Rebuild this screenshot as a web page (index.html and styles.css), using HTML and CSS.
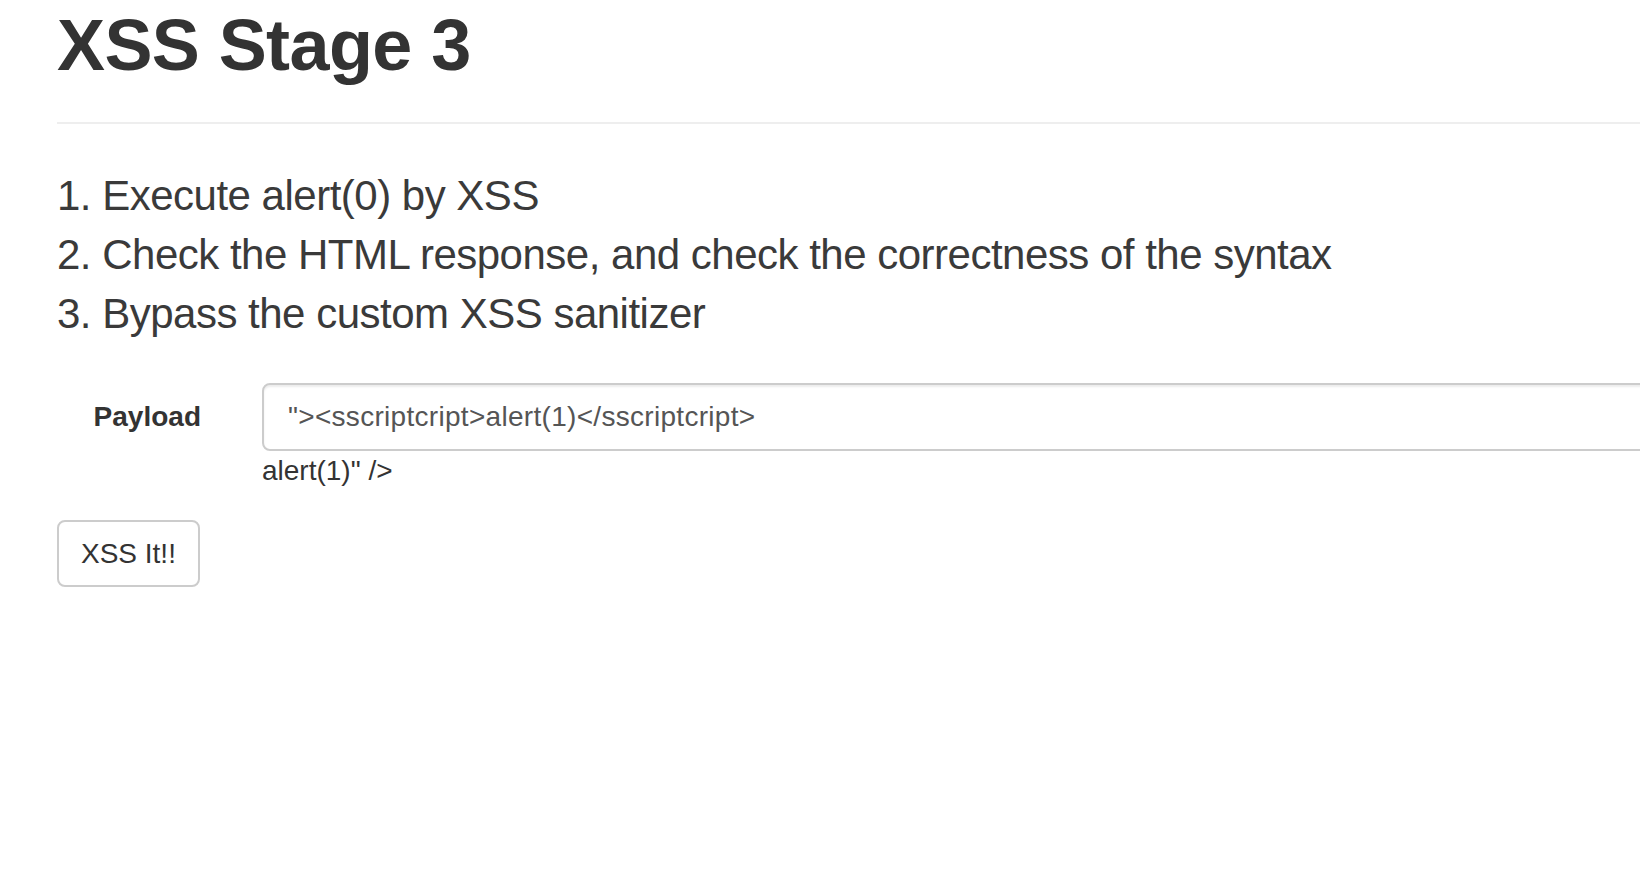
FILE: index.html
```html
<!DOCTYPE html>
<html lang="en">
<head>
<meta charset="utf-8">
<title>XSS Stage 3</title>
<link rel="stylesheet" href="styles.css">
</head>
<body>
<div class="page">
  <h1 class="title">XSS Stage 3</h1>
  <hr class="rule">
  <div class="lead">
    <div>1. Execute alert(0) by XSS</div>
    <div>2. Check the HTML response, and check the correctness of the syntax</div>
    <div>3. Bypass the custom XSS sanitizer</div>
  </div>
  <form class="form" onsubmit="return false">
    <div class="row">
      <label class="label" for="payload">Payload</label>
      <div class="field">
        <input class="input" id="payload" type="text" value="&quot;&gt;&lt;sscriptcript&gt;alert(1)&lt;/sscriptcript&gt;">
        <div class="echo">alert(1)" /&gt;</div>
      </div>
    </div>
    <button class="btn" type="submit">XSS It!!</button>
  </form>
</div>
</body>
</html>
```

FILE: styles.css
```css
html, body {
  margin: 0;
  padding: 0;
  overflow: hidden;
  background: #fff;
}
body {
  font-family: "Liberation Sans", Arial, sans-serif;
  color: #333;
}
.page {
  width: 1700px;
  padding-left: 57px;
  box-sizing: border-box;
}
.title {
  margin: 6px 0 0 0;
  font-size: 72px;
  line-height: 79px;
  font-weight: bold;
  letter-spacing: -0.6px;
  color: #333;
}
.rule {
  margin: 37px 0 0 0;
  border: 0;
  border-top: 2px solid #eee;
  height: 0;
}
.lead {
  margin-top: 43px;
  font-size: 42px;
  line-height: 58.8px;
  font-weight: 300;
  letter-spacing: -0.5px;
  color: #3a3a3a;
}
.form {
  margin-top: 40px;
}
.row {
  display: flex;
}
.label {
  width: 144px;
  flex: none;
  text-align: right;
  padding-top: 14px;
  font-size: 28px;
  line-height: 40px;
  font-weight: bold;
}
.field {
  flex: 1;
  margin-left: 61px;
}
.input {
  display: block;
  width: 100%;
  height: 68px;
  box-sizing: border-box;
  border: 2px solid #ccc;
  border-radius: 8px;
  padding: 0 24px;
  font-family: "Liberation Sans", Arial, sans-serif;
  font-size: 28px;
  letter-spacing: 0.3px;
  color: #555;
  background: #fff;
  box-shadow: inset 0 2px 2px rgba(0,0,0,.075);
  outline: none;
}
.echo {
  font-size: 28px;
  line-height: 40px;
  color: #333;
}
.btn {
  display: block;
  margin-top: 29px;
  height: 67px;
  padding: 0 22px;
  border: 2px solid #ccc;
  border-radius: 8px;
  background: #fff;
  font-family: "Liberation Sans", Arial, sans-serif;
  font-size: 28px;
  color: #333;
}
```
